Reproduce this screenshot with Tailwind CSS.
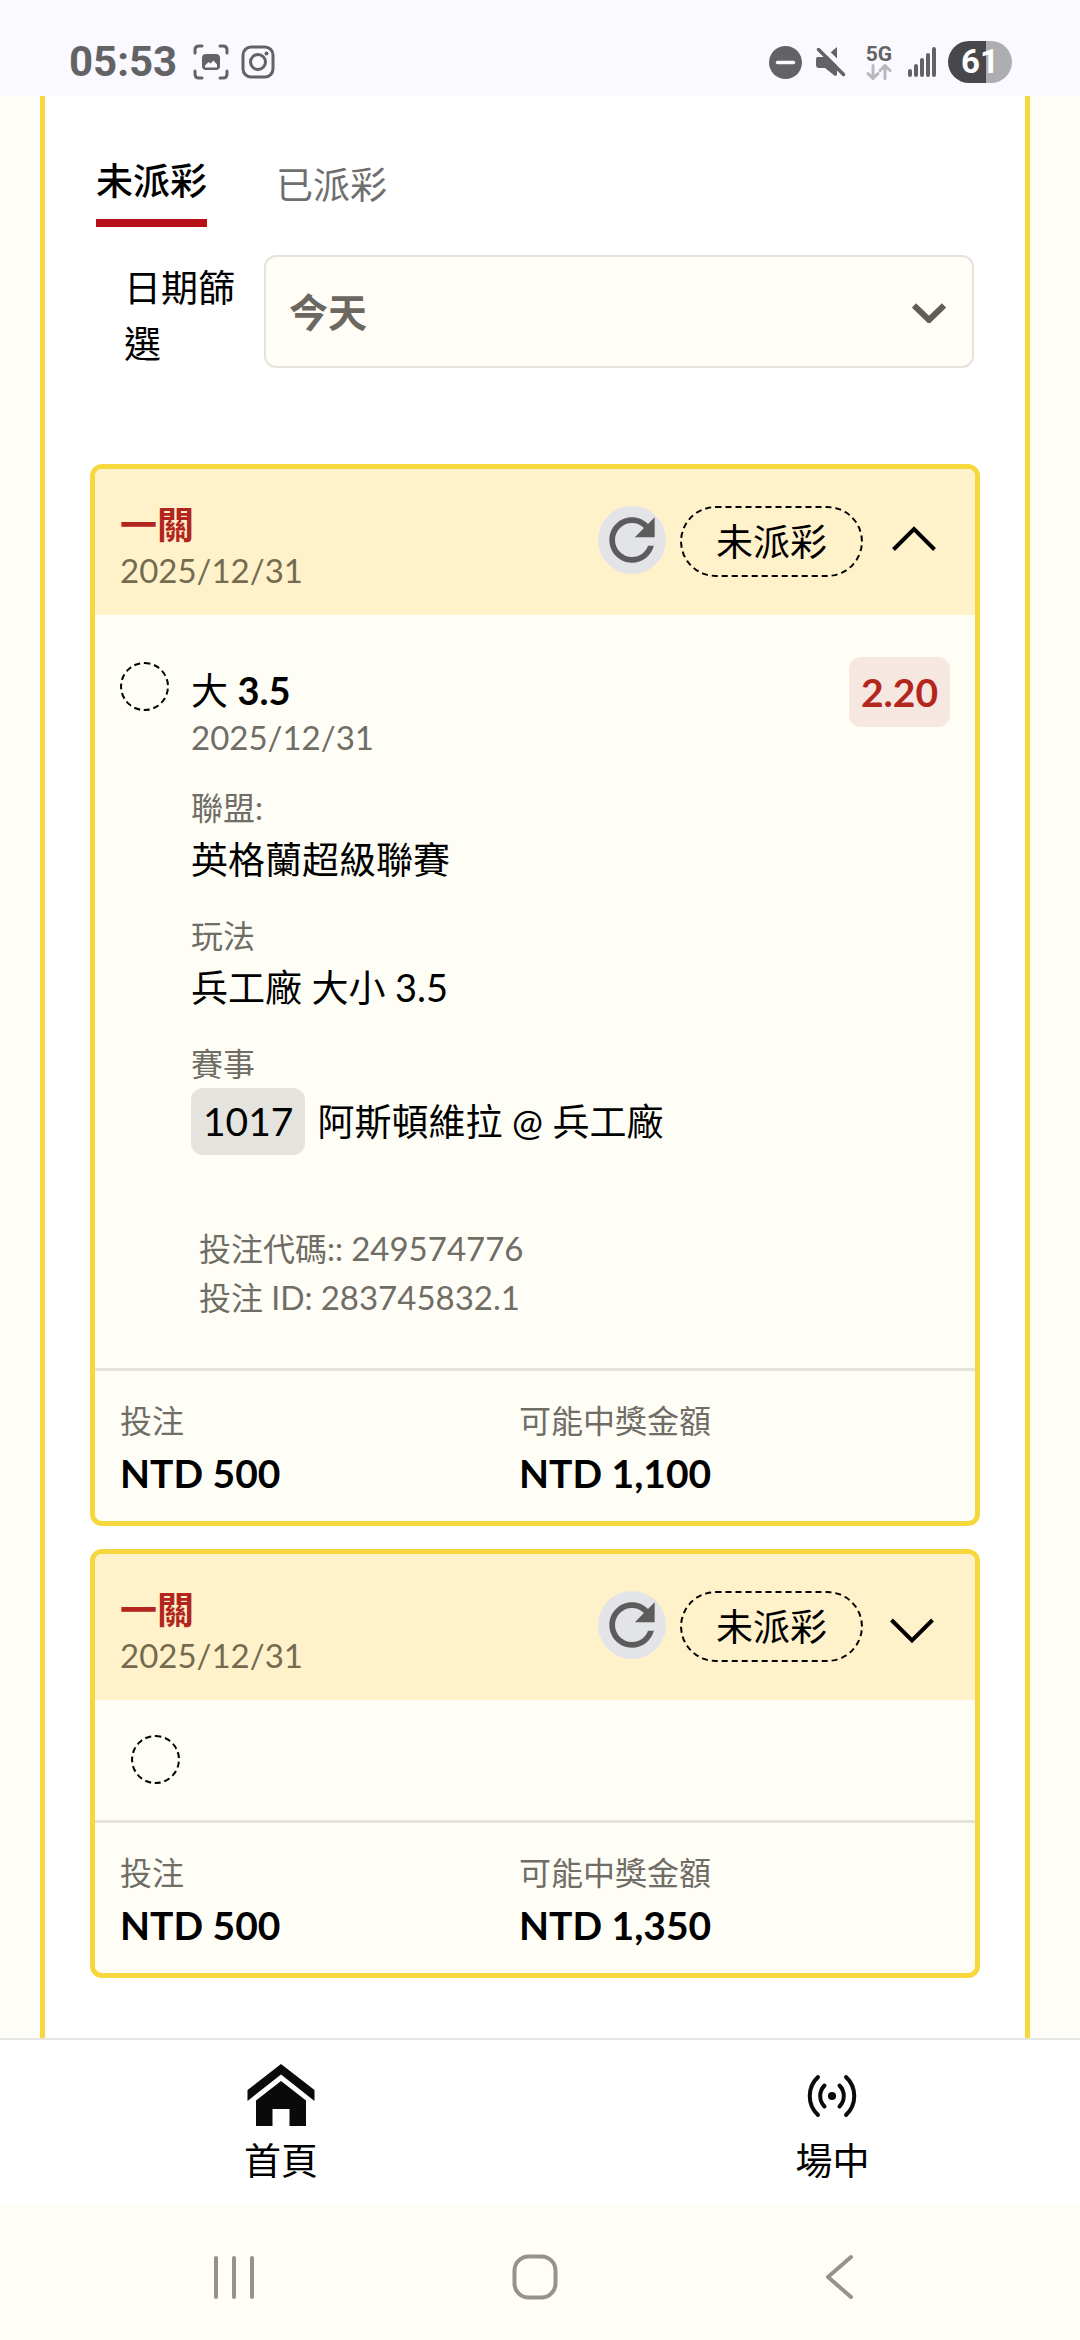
<!DOCTYPE html>
<html lang="zh-Hant">
<head>
<meta charset="utf-8">
<meta name="viewport" content="width=device-width, initial-scale=1">
<title>投注紀錄</title>
<script src="https://cdn.jsdelivr.net/npm/@tailwindcss/browser@4"></script>
</head>
<body class="flex min-h-screen flex-col bg-[#fffdf7] font-[Lato,'Noto_Sans_CJK_TC',sans-serif] text-[37px] leading-[48px] text-black">

<!-- Status bar -->
<header class="flex h-24 items-center justify-between bg-[#f9f9ff] pt-7 pr-[68px] pl-[69px] font-[Roboto,sans-serif] text-[#636366]">
  <div class="flex items-center">
    <span class="text-[42px] font-bold">05:53</span>
    <svg class="ml-4 size-[36px]" viewBox="0 0 36 36" fill="none" stroke="currentColor" stroke-width="3" stroke-linecap="round" aria-hidden="true">
      <path d="M2 9V6q0-4 4-4h3M27 2h3q4 0 4 4v3M34 27v3q0 4-4 4h-3M9 34H6q-4 0-4-4v-3"/>
      <path fill="currentColor" stroke="none" fill-rule="evenodd" d="M13 10h10q4 0 4 4v8q0 4-4 4H13q-4 0-4-4v-8q0-4 4-4zM12 23.500h12v-3l-3.500-4-3 3-2-1.500-3.500 3.500z"/>
    </svg>
    <svg class="ml-3 size-[34px]" viewBox="0 0 34 34" fill="none" stroke="currentColor" stroke-width="3" aria-hidden="true">
      <rect x="2" y="2" width="30" height="30" rx="8"/><circle cx="17" cy="17" r="7.500"/><circle cx="25.500" cy="8.500" r="2" fill="currentColor" stroke="none"/>
    </svg>
  </div>
  <div class="flex items-center">
    <svg class="size-[33px]" viewBox="0 0 33 33" aria-hidden="true"><circle cx="16.500" cy="16.500" r="16.500" fill="currentColor"/><path d="M8.500 16.500h16" stroke="#f9f9ff" stroke-width="3.500" stroke-linecap="round"/></svg>
    <svg class="ml-3 h-[34px] w-8" viewBox="0 0 32 34" aria-hidden="true">
      <path fill="currentColor" d="M3 12h8L23 2v28l-2 1L11 23H5q-3 0-3-3v-5q0-3 1-3z"/>
      <path d="M8 2l24 24" stroke="#f9f9ff" stroke-width="5"/>
      <path d="M4.500 4.500L29.500 29.500" stroke="currentColor" stroke-width="3.500" stroke-linecap="round"/>
    </svg>
    <div class="ml-5 flex flex-col items-center">
      <span class="text-[21px] leading-[20px] font-bold">5G</span>
      <svg class="h-4 w-[26px]" viewBox="0 0 26 16" fill="none" stroke="#b9b9bd" stroke-width="3" stroke-linecap="round" stroke-linejoin="round" aria-hidden="true"><path d="M7 1.500v13M2 9.500l5 5 5-5M19 14.500v-13M14 6.500l5-5 5 5"/></svg>
    </div>
    <svg class="ml-4 h-[30px] w-7" viewBox="0 0 28 30" stroke="currentColor" stroke-width="4" stroke-linecap="round" aria-hidden="true"><path d="M2 24v4M8 19v9M14 13v15M20 8v20M26 2v26"/></svg>
    <div class="ml-3 flex h-[42px] w-16 items-center justify-center rounded-full bg-linear-to-r from-[#48484a] from-60% to-[#aeaeb2] to-60% text-[33px] font-bold text-white">61</div>
  </div>
</header>

<main class="mr-[50px] ml-10 flex-1 border-x-[5px] border-[#f7d73e] bg-white px-[45px] pb-[60px]">
  <div role="tablist" class="flex gap-[69px] px-[6px] pt-[61px]">
    <button role="tab" aria-selected="true" class="border-b-8 border-[#b71018] pb-[14px] font-medium">未派彩</button>
    <button role="tab" aria-selected="false" class="self-start pt-1 text-[#6f6f6f]">已派彩</button>
  </div>

  <div class="mt-7 flex items-center gap-[25px] pr-[6px] pl-[34px]">
    <label for="date" class="w-[115px] pt-1 leading-[56px] -mb-1">日期篩選</label>
    <div class="relative flex-1">
      <select id="date" class="block h-[113px] w-full appearance-none rounded-xl border-2 border-[#e5e3dd] bg-[#fffdf5] px-[23px] text-[39px] font-bold text-[#6a6860]">
        <option>今天</option>
        <option>昨天</option>
      </select>
      <svg class="pointer-events-none absolute top-[48px] right-[28px] h-5 w-[34px]" viewBox="0 0 34 20" fill="none" stroke="#5f5e58" stroke-width="6" aria-hidden="true"><path d="M2 2.500l15 14.500 15-14.500"/></svg>
    </div>
  </div>

  <div class="mt-24 flex flex-col gap-[23px]">
    <article class="overflow-hidden rounded-xl border-[5px] border-[#f7d73e] bg-[#fffef6]">
      <div class="flex h-[146px] items-start bg-[#fff2cb] pr-[31px] pl-[25px]">
        <div class="flex-1 pt-8">
          <h2 class="font-bold text-[#b3261e]">一關</h2>
          <p class="text-[33px] leading-[42px] text-[#746b4f]">2025/12/31</p>
        </div>
        <div class="flex items-start pt-[37px]">
          <button aria-label="重新整理" class="size-[68px] rounded-full bg-[#e3e4e8]"><svg class="size-[68px]" viewBox="0 0 24 24" fill="#5c5c5d" aria-hidden="true"><path d="M17.650 6.350C16.200 4.900 14.210 4 12 4c-4.420 0-7.990 3.580-7.990 8s3.570 8 7.990 8c3.730 0 6.840-2.550 7.730-6h-2.080c-.82 2.330-3.040 4-5.650 4-3.310 0-6-2.690-6-6s2.690-6 6-6c1.660 0 3.140.69 4.220 1.780L13 11h7V4l-2.350 2.350z"/></svg></button>
          <span class="ml-[14px] flex h-[71px] w-[183px] items-center justify-center rounded-full border-2 border-dashed border-black">未派彩</span>
          <button aria-label="收合" class="ml-[21px] flex h-[71px] w-[60px] items-center justify-center"><svg class="h-8 w-11" viewBox="0 0 44 32" fill="none" stroke="#000" stroke-width="4" aria-hidden="true"><path d="M1.500 23.500L22 3l20.500 20.500"/></svg></button>
        </div>
      </div>
      <div class="flex items-start px-[25px] pt-[42px] pb-[46px]">
        <span class="mt-[5px] size-[49px] shrink-0 rounded-full border-2 border-dashed border-black"></span>
        <div class="flex-1 pt-[10px] pl-[22px]">
          <h3>大 <b class="text-[38px] leading-none">3.5</b></h3>
          <p class="text-[33px] leading-[45px] text-[#6f6d66]">2025/12/31</p>
          <dl class="pt-6">
            <dt class="text-[32px] text-[#6f6d66]">聯盟:</dt>
            <dd class="leading-[56px]">英格蘭超級聯賽</dd>
            <dt class="mt-6 text-[32px] text-[#6f6d66]">玩法</dt>
            <dd class="leading-[56px]">兵工廠 大小 <span class="text-[38px] leading-none">3.5</span></dd>
            <dt class="mt-6 text-[32px] text-[#6f6d66]">賽事</dt>
            <dd class="flex items-center gap-3"><span class="rounded-xl bg-[#e5e3dd] px-3 text-[39px] leading-[67px]">1017</span><span>阿斯頓維拉 @ 兵工廠</span></dd>
          </dl>
          <p class="px-2 pt-[69px] text-[32px] leading-[49px] text-[#6f6d66]">投注代碼:: <span class="text-[33px] leading-none">249574776</span><br>投注 ID: <span class="text-[33px] leading-none">283745832.1</span></p>
        </div>
        <strong class="rounded-xl bg-[#f7e7e1] px-3 text-[39px] leading-[70px] text-[#b3261e]">2.20</strong>
      </div>
      <dl class="grid grid-cols-[399px_1fr] border-t-[3px] border-[#e5e3dd] px-[25px] pt-[26px] pb-5">
        <div><dt class="text-[32px] text-[#6f6d66]">投注</dt><dd class="text-[39px] leading-[56px] font-bold">NTD 500</dd></div>
        <div><dt class="text-[32px] text-[#6f6d66]">可能中獎金額</dt><dd class="text-[39px] leading-[56px] font-bold">NTD 1,100</dd></div>
      </dl>
    </article>

    <article class="overflow-hidden rounded-xl border-[5px] border-[#f7d73e] bg-[#fffef6]">
      <div class="flex h-[146px] items-start bg-[#fff2cb] pr-[31px] pl-[25px]">
        <div class="flex-1 pt-8">
          <h2 class="font-bold text-[#b3261e]">一關</h2>
          <p class="text-[33px] leading-[42px] text-[#746b4f]">2025/12/31</p>
        </div>
        <div class="flex items-start pt-[37px]">
          <button aria-label="重新整理" class="size-[68px] rounded-full bg-[#e3e4e8]"><svg class="size-[68px]" viewBox="0 0 24 24" fill="#5c5c5d" aria-hidden="true"><path d="M17.650 6.350C16.200 4.900 14.210 4 12 4c-4.420 0-7.990 3.580-7.990 8s3.570 8 7.990 8c3.730 0 6.840-2.550 7.730-6h-2.080c-.82 2.330-3.040 4-5.650 4-3.310 0-6-2.690-6-6s2.690-6 6-6c1.660 0 3.140.69 4.220 1.780L13 11h7V4l-2.350 2.350z"/></svg></button>
          <span class="ml-[14px] flex h-[71px] w-[183px] items-center justify-center rounded-full border-2 border-dashed border-black">未派彩</span>
          <button aria-label="展開" class="ml-[21px] flex h-[71px] w-[60px] items-center justify-center"><svg class="h-8 w-11 overflow-visible" viewBox="0 0 44 32" fill="none" stroke="#000" stroke-width="4" aria-hidden="true"><path d="M-.5 9L20 29.500 40.500 9"/></svg></button>
        </div>
      </div>
      <div class="flex px-9 pt-[35px] pb-[36px]">
        <span class="size-[49px] rounded-full border-2 border-dashed border-black"></span>
      </div>
      <dl class="grid grid-cols-[399px_1fr] border-t-[3px] border-[#e5e3dd] px-[25px] pt-[26px] pb-5">
        <div><dt class="text-[32px] text-[#6f6d66]">投注</dt><dd class="text-[39px] leading-[56px] font-bold">NTD 500</dd></div>
        <div><dt class="text-[32px] text-[#6f6d66]">可能中獎金額</dt><dd class="text-[39px] leading-[56px] font-bold">NTD 1,350</dd></div>
      </dl>
    </article>
  </div>
</main>

<nav class="flex justify-between border-t-2 border-[#e6e6e6] bg-white pt-[19px] pr-[19.5%] pb-5 pl-[22.6%]">
  <a href="#home" class="flex flex-col items-center">
    <svg class="h-[78px] w-[68px]" viewBox="0 0 68 78" fill="#0a0a0a" aria-hidden="true"><path d="M34 5L67.500 31v11L34 15.500.5 42V31zM34 22l25 19.500V67H42.500V50h-17v17H9V41.500z"/></svg>
    <span>首頁</span>
  </a>
  <a href="#live" class="flex flex-col items-center">
    <svg class="h-[78px] w-[52px]" viewBox="0 0 52 78" fill="none" stroke="#0a0a0a" stroke-width="4" stroke-linecap="round" aria-hidden="true"><circle cx="26" cy="37" r="4" fill="#0a0a0a" stroke="none"/><path d="M18.500 26.500a15 15 0 0 0 0 21M33.500 26.500a15 15 0 0 1 0 21M12 18a26 26 0 0 0 0 38M40 18a26 26 0 0 1 0 38"/></svg>
    <span>場中</span>
  </a>
</nav>

<!-- System navigation -->
<footer class="flex h-[135px] items-center justify-between bg-[#fffdf7] pt-10 pr-[21%] pb-8 pl-[19.5%] text-[#94938e]">
  <button aria-label="最近使用"><svg class="size-[46px]" viewBox="0 0 46 46" stroke="currentColor" stroke-width="4" stroke-linecap="round" aria-hidden="true"><path d="M5 4v39M23 4v39M41 4v39"/></svg></button>
  <button aria-label="主畫面" class="mr-3"><svg class="size-[46px]" viewBox="0 0 46 46" fill="none" stroke="currentColor" stroke-width="4" aria-hidden="true"><rect x="2.500" y="2.500" width="41" height="41" rx="14"/></svg></button>
  <button aria-label="返回"><svg class="h-[46px] w-7" viewBox="0 0 28 46" fill="none" stroke="currentColor" stroke-width="4" stroke-linecap="round" stroke-linejoin="round" aria-hidden="true"><path d="M26 3L3 23l23 20"/></svg></button>
</footer>
</body>
</html>
